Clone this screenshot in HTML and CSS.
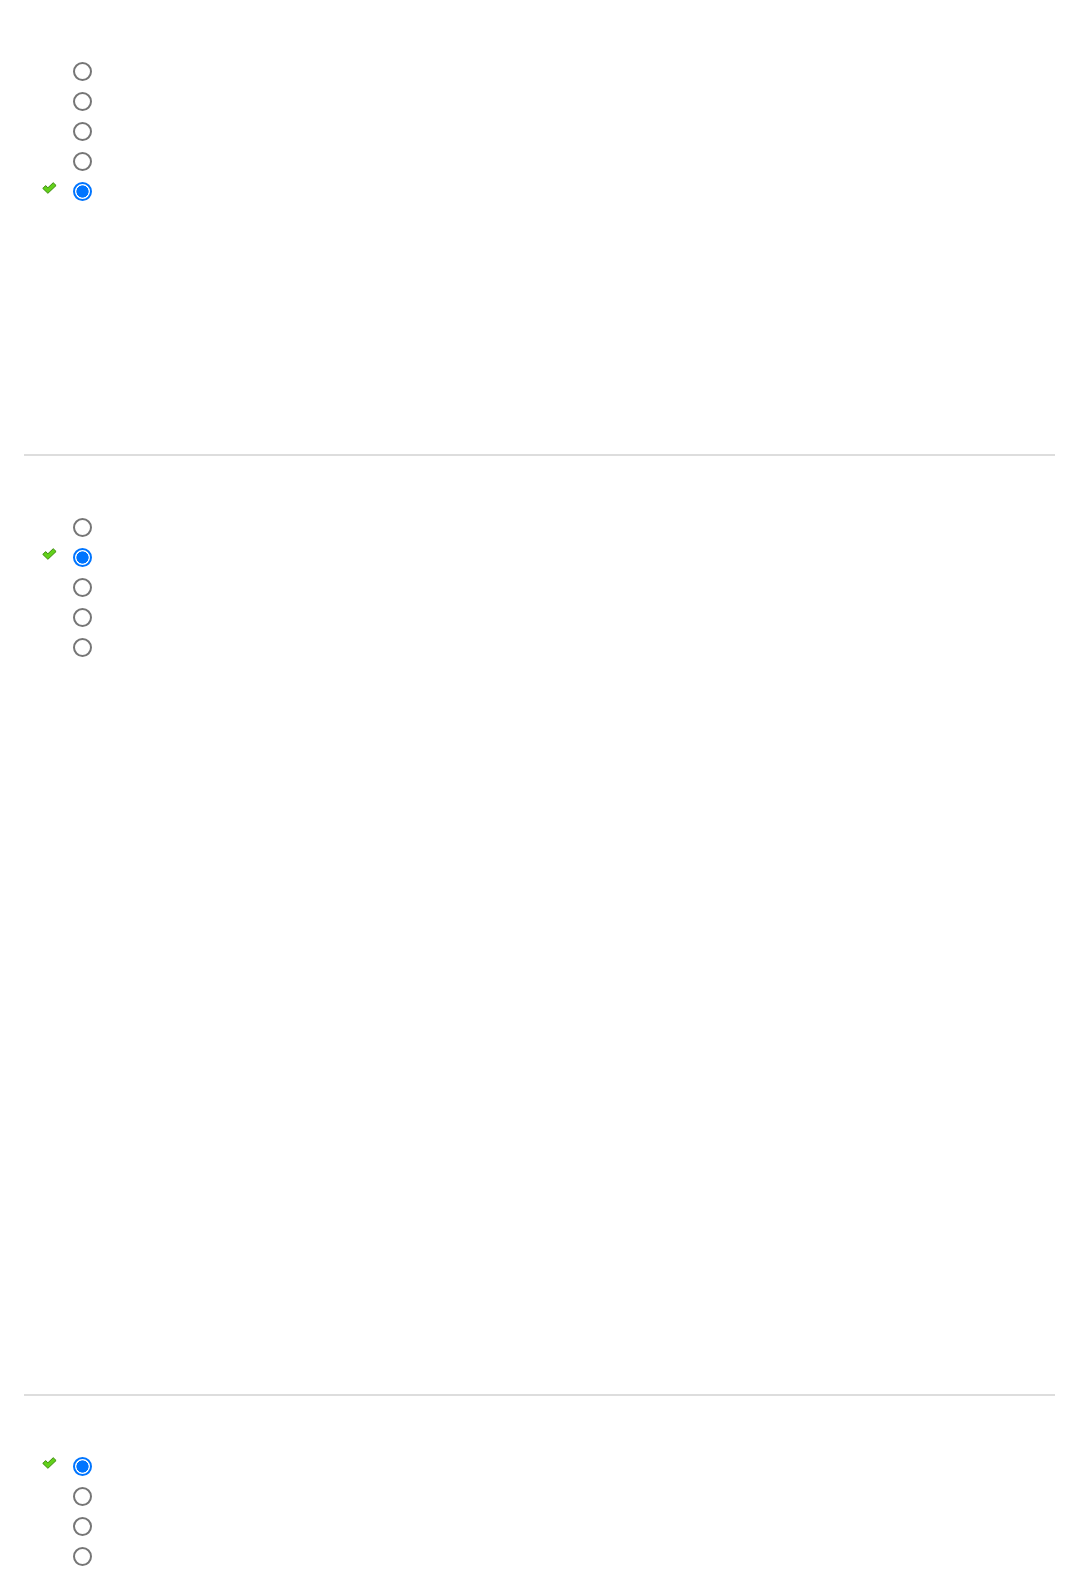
FILE: index.html
```html
<!DOCTYPE html>
<html lang="en">
<head>
<meta charset="utf-8">
<title>Quiz review</title>
<link rel="stylesheet" href="styles.css">
</head>
<body>
<main class="quiz">
  <section class="question q1">
    <div class="option"><span class="mark"></span><input class="radio" type="radio" name="q1"></div>
    <div class="option"><span class="mark"></span><input class="radio" type="radio" name="q1"></div>
    <div class="option"><span class="mark"></span><input class="radio" type="radio" name="q1"></div>
    <div class="option"><span class="mark"></span><input class="radio" type="radio" name="q1"></div>
    <div class="option"><span class="mark"><svg class="check" width="15" height="12" viewBox="0 0 15 12"><path d="M0.8 6.4 L3.6 3.6 L5.9 5.8 L11.2 0.7 L14.1 3.5 L5.9 11.3 Z" fill="#62d11a" stroke="#3d8a0e" stroke-width="1" stroke-linejoin="round"/></svg></span><input class="radio" type="radio" name="q1" checked></div>
  </section>
  <hr class="divider">
  <section class="question q2">
    <div class="option"><span class="mark"></span><input class="radio" type="radio" name="q2"></div>
    <div class="option"><span class="mark"><svg class="check" width="15" height="12" viewBox="0 0 15 12"><path d="M0.8 6.4 L3.6 3.6 L5.9 5.8 L11.2 0.7 L14.1 3.5 L5.9 11.3 Z" fill="#62d11a" stroke="#3d8a0e" stroke-width="1" stroke-linejoin="round"/></svg></span><input class="radio" type="radio" name="q2" checked></div>
    <div class="option"><span class="mark"></span><input class="radio" type="radio" name="q2"></div>
    <div class="option"><span class="mark"></span><input class="radio" type="radio" name="q2"></div>
    <div class="option"><span class="mark"></span><input class="radio" type="radio" name="q2"></div>
  </section>
  <hr class="divider">
  <section class="question q3">
    <div class="option"><span class="mark"><svg class="check" width="15" height="12" viewBox="0 0 15 12"><path d="M0.8 6.4 L3.6 3.6 L5.9 5.8 L11.2 0.7 L14.1 3.5 L5.9 11.3 Z" fill="#62d11a" stroke="#3d8a0e" stroke-width="1" stroke-linejoin="round"/></svg></span><input class="radio" type="radio" name="q3" checked></div>
    <div class="option"><span class="mark"></span><input class="radio" type="radio" name="q3"></div>
    <div class="option"><span class="mark"></span><input class="radio" type="radio" name="q3"></div>
    <div class="option"><span class="mark"></span><input class="radio" type="radio" name="q3"></div>
  </section>
</main>
</body>
</html>
```
FILE: styles.css
```css
html, body {
  margin: 0;
  padding: 0;
  background: #fff;
  font-family: "Liberation Sans", Arial, sans-serif;
}

.quiz {
  padding: 0 21px 0 24px;
}

.question {
  display: flex;
  flex-direction: column;
  padding-top: 56px;
}

.q1 { padding-bottom: 248px; }
.q2 { padding-bottom: 732px; }
.q3 { padding-top: 55px; }

.option {
  display: flex;
  align-items: center;
  height: 30px;
}

.mark {
  width: 48px;
  height: 30px;
  box-sizing: border-box;
  padding: 6px 0 0 18px;
  flex: none;
}

.check {
  display: block;
}

.radio {
  appearance: none;
  -webkit-appearance: none;
  box-sizing: border-box;
  width: 19px;
  height: 19px;
  margin: 0 0 0 1px;
  border: 2px solid #767676;
  border-radius: 50%;
  background: #fff;
  flex: none;
}

.radio:checked {
  border: 2px solid #0075ff;
  background: radial-gradient(circle, #0075ff 0 5.8px, #fff 6.4px);
}

.divider {
  margin: 0;
  height: 2px;
  border: 0;
  background: #dddddd;
}
```
